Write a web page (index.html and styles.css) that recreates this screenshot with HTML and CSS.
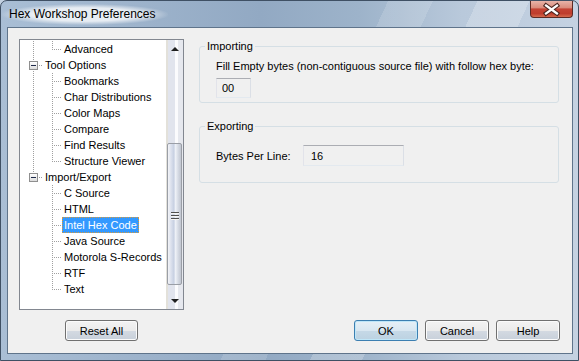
FILE: index.html
```html
<!DOCTYPE html>
<html lang="en">
<head>
  <meta charset="UTF-8" />
  <title>Hex Workshop Preferences</title>
  <link rel="stylesheet" href="styles.css">
</head>
<body>
  <div class="window">
    <div class="titlebar">
      <span class="title">Hex Workshop Preferences</span>
      <button class="close" aria-label="Close">
        <svg width="41" height="15" viewBox="0 0 41 15">
          <path d="M15 3.5 L26 11.5 M26 3.5 L15 11.5" stroke="#4a2520" stroke-width="4.4" stroke-linecap="square" fill="none"/>
          <path d="M15 3.5 L26 11.5 M26 3.5 L15 11.5" stroke="#fff" stroke-width="2.2" stroke-linecap="square" fill="none"/>
        </svg>
      </button>
    </div>

    <div class="client">
      <div class="main">
        <div class="tree">
          <ul class="tree-list">
            <li class="row"><span class="g pipe"></span><span class="g elbow"></span><span class="label">Advanced</span></li>
            <li class="row"><span class="g tee"><span class="box"></span></span><span class="label">Tool Options</span></li>
            <li class="row"><span class="g pipe"></span><span class="g tee"></span><span class="label">Bookmarks</span></li>
            <li class="row"><span class="g pipe"></span><span class="g tee"></span><span class="label">Char Distributions</span></li>
            <li class="row"><span class="g pipe"></span><span class="g tee"></span><span class="label">Color Maps</span></li>
            <li class="row"><span class="g pipe"></span><span class="g tee"></span><span class="label">Compare</span></li>
            <li class="row"><span class="g pipe"></span><span class="g tee"></span><span class="label">Find Results</span></li>
            <li class="row"><span class="g pipe"></span><span class="g elbow"></span><span class="label">Structure Viewer</span></li>
            <li class="row"><span class="g elbow"><span class="box"></span></span><span class="label">Import/Export</span></li>
            <li class="row"><span class="g"></span><span class="g tee"></span><span class="label">C Source</span></li>
            <li class="row"><span class="g"></span><span class="g tee"></span><span class="label">HTML</span></li>
            <li class="row"><span class="g"></span><span class="g tee"></span><span class="label selected">Intel Hex Code</span></li>
            <li class="row"><span class="g"></span><span class="g tee"></span><span class="label">Java Source</span></li>
            <li class="row"><span class="g"></span><span class="g tee"></span><span class="label">Motorola S-Records</span></li>
            <li class="row"><span class="g"></span><span class="g tee"></span><span class="label">RTF</span></li>
            <li class="row"><span class="g"></span><span class="g elbow"></span><span class="label">Text</span></li>
          </ul>
          <div class="scrollbar">
            <div class="sb-btn"><span class="arrow up"></span></div>
            <div class="sb-track">
              <div class="sb-thumb"><span class="grip"></span></div>
            </div>
            <div class="sb-btn"><span class="arrow down"></span></div>
          </div>
        </div>

        <div class="pages">
          <fieldset class="group">
            <legend>Importing</legend>
            <p class="group-text">Fill Empty bytes (non-contiguous source file) with follow hex byte:</p>
            <input class="field field-hex" type="text" value="00" readonly>
          </fieldset>
          <fieldset class="group group-export">
            <legend>Exporting</legend>
            <div class="field-row">
              <label class="field-label">Bytes Per Line:</label>
              <input class="field field-wide" type="text" value="16" readonly>
            </div>
          </fieldset>
        </div>
      </div>

      <div class="footer">
        <div class="footer-left">
          <button class="btn btn-reset">Reset All</button>
        </div>
        <div class="footer-right">
          <button class="btn default">OK</button>
          <button class="btn">Cancel</button>
          <button class="btn">Help</button>
        </div>
      </div>
    </div>
  </div>
</body>
</html>
```

FILE: styles.css
```css
body {
  margin: 0;
  padding: 0;
  background: #c3d1e1;
  font-family: "Liberation Sans", Arial, sans-serif;
  font-size: 11px;
  color: #000;
}

.window {
  width: 579px;
  height: 361px;
  box-sizing: border-box;
  display: flex;
  flex-direction: column;
  padding: 0 5px 6px 6px;
  border: 1px solid #3f5064;
  border-radius: 7px 7px 0 0;
  background:
    linear-gradient(115deg, transparent 0 52%, rgba(255,255,255,0.14) 52% 58%, transparent 58% 64%, rgba(255,255,255,0.22) 64% 71%, transparent 71%),
    linear-gradient(to right, #a9bed5 0%, #92a9c3 45%, #9db3ca 62%, #b9c9db 80%, #c5d2e2 100%);
}

/* title bar */
.titlebar {
  height: 26px;
  display: flex;
  align-items: flex-start;
  justify-content: space-between;
}

.title {
  margin: 3px 0 0 -5px;
  padding: 0 12px 0 7px;
  height: 21px;
  line-height: 20px;
  font-size: 12px;
  border-radius: 10px;
  background: radial-gradient(ellipse at center, rgba(255,255,255,0.75) 45%, rgba(255,255,255,0) 72%);
}

.close {
  width: 43px;
  height: 17px;
  padding: 0;
  margin: 0;
  border: 1px solid #5d2a24;
  border-top: 0;
  border-radius: 0 0 4px 4px;
  background: linear-gradient(#e8b3a8 0%, #da8c7c 42%, #c44334 50%, #bf3d2d 78%, #d66a4d 100%);
  display: flex;
  align-items: center;
  justify-content: center;
}

.close svg {
  display: block;
}

/* client area */
.client {
  flex: 1;
  display: flex;
  flex-direction: column;
  background: #f0f0f0;
  border: 1px solid #5f748b;
  padding: 11px 0 0 11px;
}

.main {
  display: flex;
  gap: 15px;
  height: 271px;
}

/* tree */
.tree {
  width: 165px;
  box-sizing: border-box;
  border: 1px solid #828790;
  background: #fff;
  display: flex;
}

.tree-list {
  flex: 1;
  list-style: none;
  margin: 0;
  padding: 1px 0 0 4px;
  overflow: hidden;
}

.row {
  display: flex;
  height: 16px;
}

.g {
  --dv: repeating-linear-gradient(to bottom, #a0a0a0 0 1px, transparent 1px 2px);
  --dh: repeating-linear-gradient(to right, #a0a0a0 0 1px, transparent 1px 2px);
  flex: none;
  width: 19px;
  height: 16px;
}

.pipe {
  background: var(--dv) 9px 0 / 1px 16px no-repeat;
}

.tee {
  background:
    var(--dh) 11px 8px / 8px 1px no-repeat,
    var(--dv) 9px 0 / 1px 16px no-repeat;
}

.elbow {
  background:
    var(--dh) 11px 8px / 8px 1px no-repeat,
    var(--dv) 9px 0 / 1px 9px no-repeat;
}

.box {
  display: block;
  width: 9px;
  height: 9px;
  box-sizing: border-box;
  margin: 4px 0 0 5px;
  border: 1px solid #8f8f8f;
  background:
    linear-gradient(#1e2a4a, #1e2a4a) center / 5px 1px no-repeat,
    linear-gradient(#ffffff, #dcdcdc);
}

.label {
  height: 16px;
  box-sizing: border-box;
  padding: 0 1px;
  line-height: 14px;
  border: 1px solid transparent;
  white-space: nowrap;
}

.label.selected {
  background: #3399ff;
  color: #fff;
  border: 1px dotted #d89a3c;
}

/* scrollbar */
.scrollbar {
  width: 17px;
  display: flex;
  flex-direction: column;
  background: linear-gradient(to right, #e3e1da 0 2px, #e1e4ed 2px 55%, #fbfbfd 55% 72%, #e6e8ee 72%);
}

.sb-btn {
  height: 17px;
  display: flex;
  align-items: center;
  justify-content: center;
}

.arrow {
  width: 0;
  height: 0;
  border-left: 4px solid transparent;
  border-right: 4px solid transparent;
}

.arrow.up {
  border-bottom: 4px solid #1f1f1f;
}

.arrow.down {
  border-top: 4px solid #1f1f1f;
}

.sb-track {
  flex: 1;
  padding-top: 86px;
}

.sb-thumb {
  height: 142px;
  box-sizing: border-box;
  margin: 0 1px;
  border: 1px solid #9a9ea6;
  border-radius: 2px;
  background: linear-gradient(to right, #f3f4f7 0%, #dde2ee 22%, #c7d0e2 45%, #eef1f7 58%, #d3d8e2 80%, #c1c6d0 100%);
  display: flex;
  align-items: center;
  justify-content: center;
}

.grip {
  width: 8px;
  height: 8px;
  margin-top: 4px;
  background: repeating-linear-gradient(to bottom, #4f4f4f 0 1px, #f4f4f4 1px 2px, transparent 2px 3px);
}

/* property pages */
.pages {
  width: 360px;
}

.group {
  margin: 0;
  padding: 7px 16px 0;
  height: 64px;
  box-sizing: border-box;
  min-width: 0;
  border: 1px solid #d5dfe5;
  border-radius: 3px;
}

.group legend {
  padding: 0 2px;
  margin-left: -11px;
  line-height: 14px;
}

.group-export {
  margin-top: 16px;
  padding-top: 12px;
}

.group-text {
  margin: 0;
  line-height: 13px;
}

.field {
  box-sizing: border-box;
  margin: 0;
  font: inherit;
  color: #000;
  background: transparent;
  border: 1px solid;
  border-color: #abadb3 #dbdfe6 #e3e9ef #e2e3ea;
  outline: none;
}

.field-hex {
  display: block;
  margin-top: 5px;
  width: 35px;
  height: 20px;
  padding: 0 5px;
}

.field-row {
  display: flex;
  align-items: center;
}

.field-label {
  width: 87px;
}

.field-wide {
  width: 101px;
  height: 21px;
  padding: 0 7px;
}

/* buttons */
.footer {
  display: flex;
  height: 21px;
  margin-top: 10px;
}

.footer-left {
  width: 165px;
  display: flex;
  justify-content: center;
}

.footer-right {
  flex: 1;
  display: flex;
  justify-content: flex-end;
  gap: 7px;
  padding-right: 12px;
}

.btn {
  width: 64px;
  height: 21px;
  padding: 0;
  font: inherit;
  color: #000;
  border: 1px solid #707070;
  border-radius: 3px;
  box-shadow: inset 0 0 0 1px #fbfbfb;
  background: linear-gradient(#f3f3f3 0%, #ebebeb 50%, #d4dae2 50%, #c8d0da 100%);
}

.btn-reset {
  width: 73px;
}

.btn.default {
  border-color: #3c7fb1;
  box-shadow: inset 0 0 0 1px #bfe6f8;
  background: linear-gradient(#e6f0f7 0%, #d9e7f1 50%, #c6d9e7 50%, #bcd2e2 100%);
}
```
